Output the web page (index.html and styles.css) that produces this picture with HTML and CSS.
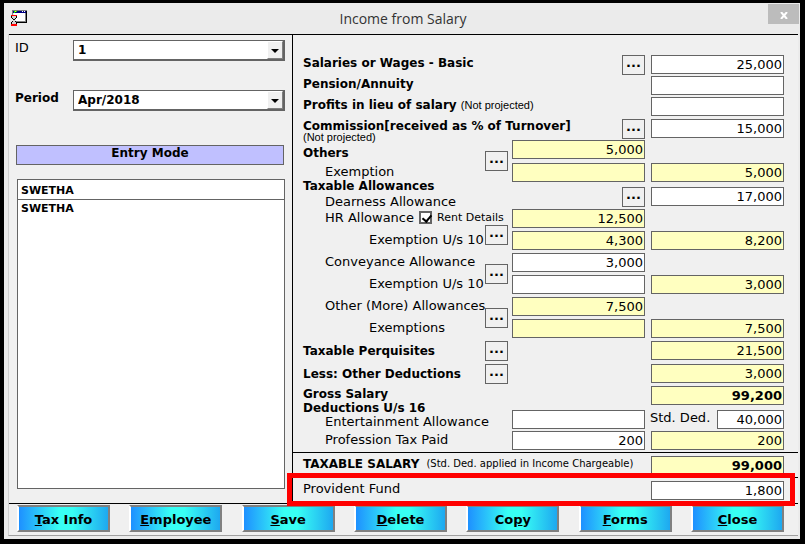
FILE: index.html
```html
<!DOCTYPE html>
<html lang="en">

<head>
    <meta charset="UTF-8">
    <meta name="viewport" content="width=device-width, initial-scale=1.0">
    <title>Income from Salary</title>
    <link rel="stylesheet" href="styles.css">
</head>
<body>
    <div class="window">
        <div class="titlebar">
            <svg class="app-icon" width="16" height="16" viewBox="0 0 16 16" shape-rendering="crispEdges">
                <path fill="#808080" d="M1 0h15v13H5v-2h9V3H2v2H1z"/>
                <path fill="#000" d="M15 1h1v12H5v-1h10z"/>
                <path fill="#fff" d="M3 3h11v8H5V8H3z"/>
                <path fill="#000080" d="M2 1h13v2H2z"/>
                <path fill="#ff0" d="M4 1h1v1H4z"/>
                <path fill="#0f0" d="M3 1h1v2H3zM5 1h1v1H5z"/>
                <path fill="#fff" d="M11 1h1v1h-1zM13 1h1v1h-1z"/>
                <path fill="#d0d0d0" d="M1 6h4v2L4 10l1 2v2H1v-2l1-2-1-2z"/>
                <path fill="#000" d="M0 6h1v2H0zM5 6h1v2H5zM1 8h1v1H1zM4 8h1v1H4zM2 9h2v1H2zM1 11h1v1H1zM4 11h1v1H4zM0 12h1v2H0zM5 12h1v2H5z"/>
                <path fill="#f00" d="M0 5h6v1H0zM0 14h6v2H0z"/>
            </svg>
            <h1>Income from Salary</h1>
            <button class="close-x" type="button" aria-label="Close window">
                <svg width="8" height="7" viewBox="0 0 8 7"><path d="M1 0l6 7M7 0L1 7" stroke="#fff" stroke-width="2"/></svg>
            </button>
        </div>

        <form class="client">
            <div class="panes">
                <div class="left">
                    <div class="pick">
                        <label for="empId">ID</label>
                        <span class="combo">
                            <select id="empId"><option>1</option></select>
                            <span class="arrow"></span>
                        </span>
                    </div>
                    <div class="pick">
                        <label for="period" class="strong">Period</label>
                        <span class="combo">
                            <select id="period"><option>Apr/2018</option></select>
                            <span class="arrow"></span>
                        </span>
                    </div>
                    <div class="mode">Entry Mode</div>
                    <div class="names">
                        <input type="text" value="SWETHA" aria-label="Employee name">
                        <select size="2" aria-label="Employees"><option>SWETHA</option></select>
                    </div>
                </div>

                <div class="right">
                    <div class="grid">
                        <label class="head" for="basic">Salaries or Wages - Basic</label>
                        <button type="button" class="dots in-mid">...</button>
                        <input id="basic" class="total" value="25,000">

                        <label class="head" for="pension">Pension/Annuity</label>
                        <input id="pension" class="total">

                        <label class="head" for="profits">Profits in lieu of salary <small>(Not projected)</small></label>
                        <input id="profits" class="total">

                        <label class="head stack" for="commission">Commission[received as % of Turnover]<small>(Not projected)</small></label>
                        <button type="button" class="dots in-mid">...</button>
                        <input id="commission" class="total" value="15,000">

                        <label class="head low" for="others">Others</label>
                        <button type="button" class="dots two-rows">...</button>
                        <input id="others" class="mid calc" value="5,000" readonly>
                        <label class="sub" for="othersEx">Exemption</label>
                        <input id="othersEx" class="mid calc" readonly>
                        <input class="total calc" value="5,000" readonly aria-label="Others total">

                        <div class="group">
                            <span class="head">Taxable Allowances</span>
                            <label class="sub" for="dearness">Dearness Allowance</label>
                        </div>
                        <button type="button" class="dots in-mid">...</button>
                        <input id="dearness" class="total" value="17,000">

                        <div class="sub rent">
                            <label for="hra">HR Allowance</label>
                            <input type="checkbox" id="rent" checked>
                            <label for="rent" class="rent-label">Rent Details</label>
                        </div>
                        <button type="button" class="dots two-rows lower">...</button>
                        <input id="hra" class="mid calc" value="12,500" readonly>
                        <label class="sub deep" for="hraEx">Exemption U/s 10</label>
                        <input id="hraEx" class="mid calc" value="4,300" readonly>
                        <input class="total calc" value="8,200" readonly aria-label="HR total">

                        <label class="sub" for="conv">Conveyance Allowance</label>
                        <button type="button" class="dots two-rows">...</button>
                        <input id="conv" class="mid" value="3,000">
                        <label class="sub deep" for="convEx">Exemption U/s 10</label>
                        <input id="convEx" class="mid">
                        <input class="total calc" value="3,000" readonly aria-label="Conveyance total">

                        <label class="sub" for="more">Other (More) Allowances</label>
                        <button type="button" class="dots two-rows">...</button>
                        <input id="more" class="mid calc" value="7,500" readonly>
                        <label class="sub deep" for="moreEx">Exemptions</label>
                        <input id="moreEx" class="mid calc" readonly>
                        <input class="total calc" value="7,500" readonly aria-label="Other allowances total">

                        <label class="head roomy" for="perq">Taxable Perquisites</label>
                        <button type="button" class="dots">...</button>
                        <input id="perq" class="total calc" value="21,500" readonly>

                        <label class="head roomy" for="less">Less: Other Deductions</label>
                        <button type="button" class="dots">...</button>
                        <input id="less" class="total calc" value="3,000" readonly>

                        <label class="head" for="gross">Gross Salary</label>
                        <input id="gross" class="total calc sum" value="99,200" readonly>

                        <div class="group dense">
                            <span class="head">Deductions U/s 16</span>
                            <label class="sub" for="ent">Entertainment Allowance</label>
                        </div>
                        <input id="ent" class="mid">
                        <div class="std">
                            <label for="std">Std. Ded.</label>
                            <input id="std" value="40,000">
                        </div>

                        <label class="sub" for="ptax">Profession Tax Paid</label>
                        <input id="ptax" class="mid" value="200">
                        <input class="total calc" value="200" readonly aria-label="Deductions total">
                    </div>

                    <div class="line">
                        <label class="head" for="taxable">TAXABLE SALARY</label>
                        <span class="hint">(Std. Ded. applied in Income Chargeable)</span>
                        <input id="taxable" class="calc sum" value="99,000" readonly>
                    </div>
                    <div class="line marked">
                        <label for="pf">Provident Fund</label>
                        <input id="pf" value="1,800">
                    </div>
                </div>
            </div>

            <div class="actions">
                <button type="button"><u>T</u>ax Info</button>
                <button type="button"><u>E</u>mployee</button>
                <button type="button"><u>S</u>ave</button>
                <button type="button"><u>D</u>elete</button>
                <button type="button">Co<u>p</u>y</button>
                <button type="button"><u>F</u>orms</button>
                <button type="button"><u>C</u>lose</button>
            </div>
        </form>
    </div>
</body>

</html>
```

FILE: styles.css
```css
* {
    box-sizing: border-box;
}

body {
    margin: 0;
    padding: 3px 5px 5px 4px;
    min-height: 100vh;
    display: flex;
    background: #000;
    color: #000;
    font-family: "DejaVu Sans", Verdana, sans-serif;
    font-size: 13px;
}

.window {
    flex: 1;
    min-width: 0;
    display: flex;
    flex-direction: column;
    padding: 0 2px 3px 4px;
    background: #ebebeb;
}

/* title bar */
.titlebar {
    position: relative;
    height: 31px;
    display: flex;
    align-items: center;
    justify-content: center;
}

.titlebar h1 {
    margin: 0;
    font: 14px "Open Sans", "Segoe UI", sans-serif;
    color: #333;
}

.app-icon {
    position: absolute;
    left: 3px;
    top: 7px;
}

.close-x {
    position: absolute;
    right: -1px;
    top: 1px;
    width: 31px;
    height: 20px;
    padding: 0;
    border: 0;
    background: #bcbcbc;
}

.client {
    flex: 1;
    display: flex;
    flex-direction: column;
    border-left: 1px solid #d0d0d0;
    border-bottom: 1px solid #a0a0a0;
    background: #f0f0f0;
}

.panes {
    flex: 1;
    display: flex;
    border-top: 1px solid #000;
    border-bottom: 1px solid #000;
}

input, select {
    margin: 0;
    border: 1px solid #646464;
    border-radius: 0;
    background: #fff;
    color: #000;
    font: 13px "DejaVu Sans", Verdana, sans-serif;
}

/* left pane */
.left {
    width: 284px;
    padding: 5px 7px 14px 6px;
    display: flex;
    flex-direction: column;
    border-right: 1px solid #000;
}

.pick {
    display: flex;
    margin-bottom: 29px;
}

.pick label {
    width: 58px;
    line-height: 16px;
}

.strong {
    font-weight: bold;
    font-size: 12px;
}

.combo {
    position: relative;
    flex: 1;
}

.combo select {
    display: block;
    width: 100%;
    height: 21px;
    padding: 0 4px;
    appearance: none;
    border-right-width: 2px;
    border-bottom-width: 2px;
    font-weight: bold;
    font-size: 12px;
}

.arrow {
    position: absolute;
    top: 1px;
    right: 2px;
    width: 16px;
    height: 18px;
    border: 1px solid #fff;
    border-right-color: #808080;
    border-bottom-color: #808080;
    background: #f0f0f0;
    pointer-events: none;
}

.arrow::after {
    content: "";
    position: absolute;
    left: 3px;
    top: 7px;
    border: 4px solid transparent;
    border-top-color: #000;
    border-bottom: 0;
}

.mode {
    height: 20px;
    margin: 5px 1px 14px;
    border: 1px solid #646464;
    background: #c0c0ff;
    font-size: 12px;
    font-weight: bold;
    line-height: 15px;
    text-align: center;
}

.names {
    flex: 1;
    display: flex;
    flex-direction: column;
    margin-left: 2px;
}

.names input {
    height: 21px;
    padding: 2px 3px 0;
    font-size: 11px;
    font-weight: bold;
}

.names select {
    flex: 1;
    border-top: 0;
}

.names option {
    padding: 2px 3px;
    font: bold 11px "DejaVu Sans", Verdana, sans-serif;
}

/* right pane */
.right {
    flex: 1;
    min-width: 0;
    display: flex;
    flex-direction: column;
}

.grid {
    flex: 1;
    display: grid;
    grid-template-columns: minmax(0, 1fr) 27px 133px 139px;
    grid-template-rows: 21px 21px 22px 21px 23px 24px repeat(7, 22px) 23px 22px 24px 21px 19px;
    padding: 20px 14px 0 10px;
}

.right label, .head {
    grid-column: 1;
    line-height: 16px;
    white-space: nowrap;
}

.right .head {
    font-size: 12px;
    font-weight: bold;
}

.right .low {
    padding-top: 5px;
}

.right .roomy {
    line-height: 20px;
}

.sub, .right .sub, .right .sub label {
    grid-column: 1;
    line-height: 18px;
}

.sub {
    padding-left: 22px;
}

.deep {
    padding-left: 66px;
}

small {
    font: 11px "Liberation Sans", Arial, sans-serif;
}

.right .stack {
    line-height: 14px;
}

.stack small {
    display: block;
    line-height: 9px;
}

.group {
    grid-column: 1;
    display: flex;
    flex-direction: column;
    margin-top: -8px;
}

.right .group > * {
    line-height: 15px;
}

.right .dense > * {
    line-height: 13px;
}

.right input {
    width: 133px;
    height: 19px;
    padding: 0 1px;
    text-align: right;
}

.right .mid {
    grid-column: 3;
}

.right .total {
    grid-column: 4;
    justify-self: end;
}

.right .calc {
    background: #ffffc0;
}

.right .sum {
    font-weight: bold;
}

.dots {
    grid-column: 2;
    width: 23px;
    height: 20px;
    padding: 0 0 4px;
    border: 1px solid #646464;
    background: #f0f0f0;
    font: bold 13px/12px "DejaVu Sans", Verdana, sans-serif;
}

.in-mid {
    grid-column: 3;
    justify-self: end;
}

.two-rows {
    grid-row: span 2;
    margin-top: 11px;
}

.lower {
    margin-top: 16px;
}

.rent {
    display: flex;
}

.right .rent input {
    position: relative;
    flex: none;
    appearance: none;
    width: 13px;
    height: 13px;
    margin: 2px 5px 0;
    border: 2px solid #646464;
}

.rent input:checked::after {
    content: "";
    position: absolute;
    left: 3px;
    top: 0;
    width: 4px;
    height: 7px;
    border: solid #000;
    border-width: 0 2px 2px 0;
    transform: rotate(40deg);
}

.rent .rent-label {
    font-size: 11px;
}

.std {
    grid-column: 4;
    display: flex;
    justify-content: space-between;
    padding-left: 5px;
}

.right .std input {
    width: 67px;
}

.line {
    position: relative;
    display: flex;
    height: 25px;
    padding: 3px 14px 0 10px;
    border-top: 1px solid #000;
}

.line input {
    margin-left: auto;
}

.hint {
    padding-left: 7px;
    font-size: 10px;
    line-height: 15px;
}

/* red frame round the provident fund row */
.marked {
    height: 26px;
}

.marked::after {
    content: "";
    position: absolute;
    top: -5px;
    right: 3px;
    bottom: -3px;
    left: -6px;
    border: 5px solid #f00;
    pointer-events: none;
}

/* bottom buttons */
.actions {
    display: flex;
    justify-content: space-between;
    padding: 1px 14px 3px 8px;
}

.actions button {
    width: 93px;
    height: 27px;
    padding: 2px 0 0;
    border: 2px solid #808080;
    border-left-color: #fff;
    background: linear-gradient(90deg, #1e90ff, #38fff4 45%, #38fff4 60%, #1ea8f0);
    font: bold 13px "DejaVu Sans", Verdana, sans-serif;
}
```
